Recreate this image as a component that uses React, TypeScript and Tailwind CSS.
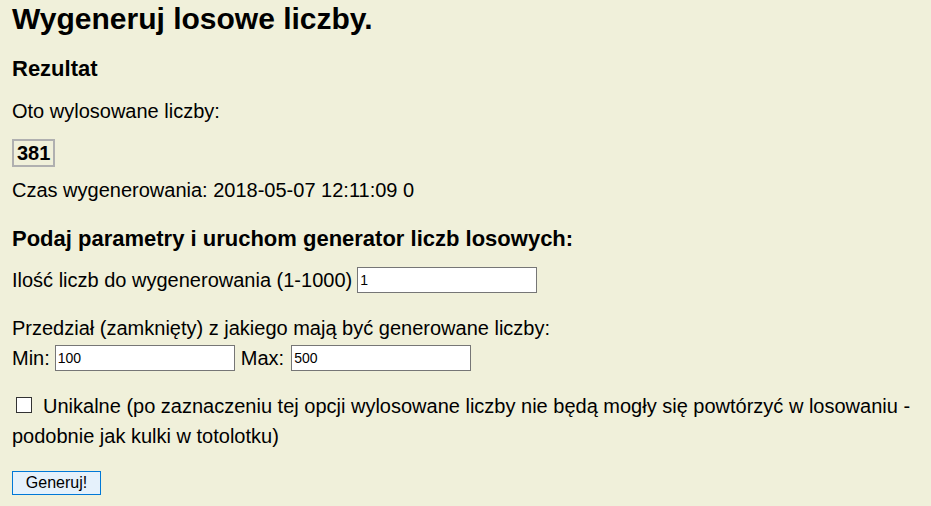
export default function App() {
  return (
    <div
      className="min-h-screen bg-[#f0f0da] px-3 pt-[2px] text-[20px] leading-[28px] text-black"
      style={{ fontFamily: '"Liberation Sans", Arial, sans-serif' }}
    >
      <h1 className="text-[30px] font-bold leading-[34px]">Wygeneruj losowe liczby.</h1>

      <h3 className="mt-[19px] text-[22px] font-bold leading-[28px]">Rezultat</h3>
      <p className="mt-[14px]">Oto wylosowane liczby:</p>
      <div className="mt-[14px] flex">
        <span className="border-2 border-[#b0b0b0] px-[3px] text-[20px] font-bold leading-[24px]">381</span>
      </div>
      <p className="mt-[9px]">Czas wygenerowania: 2018-05-07 12:11:09 0</p>

      <h3 className="mt-[21px] text-[22px] font-bold leading-[28px]">
        Podaj parametry i uruchom generator liczb losowych:
      </h3>
      <form className="mt-[13px]" onSubmit={(e) => e.preventDefault()}>
        <div className="flex h-[28px] items-center gap-[5px]">
          <span>Ilość liczb do wygenerowania (1-1000)</span>
          <Field value="1" />
        </div>

        <p className="mt-[20px]">Przedział (zamknięty) z jakiego mają być generowane liczby:</p>
        <div className="mt-[2px] flex h-[28px] items-center">
          <span className="mr-[5px]">Min:</span>
          <Field value="100" />
          <span className="ml-[6px] mr-[7px]">Max:</span>
          <Field value="500" />
        </div>

        <div className="mt-[19px] leading-[30px]">
          <div className="pl-[4px]">
            <input
              type="checkbox"
              className="mr-[11px] inline-block h-[16px] w-[16px] appearance-none border border-[#333] bg-white align-baseline"
            />
            Unikalne (po zaznaczeniu tej opcji wylosowane liczby nie będą mogły się powtórzyć w losowaniu -
          </div>
          <div>podobnie jak kulki w totolotku)</div>
        </div>

        <button
          type="submit"
          className="mt-[20px] h-[24px] w-[89px] border border-[#0078d7] bg-[#e5f1fb] text-[16px] leading-[20px]"
        >
          Generuj!
        </button>
      </form>
    </div>
  );
}

function Field({ value }: { value: string }) {
  return (
    <input
      type="text"
      defaultValue={value}
      className="h-[26px] w-[180px] border border-[#767676] bg-white px-[2px] text-[14px] outline-none"
    />
  );
}
